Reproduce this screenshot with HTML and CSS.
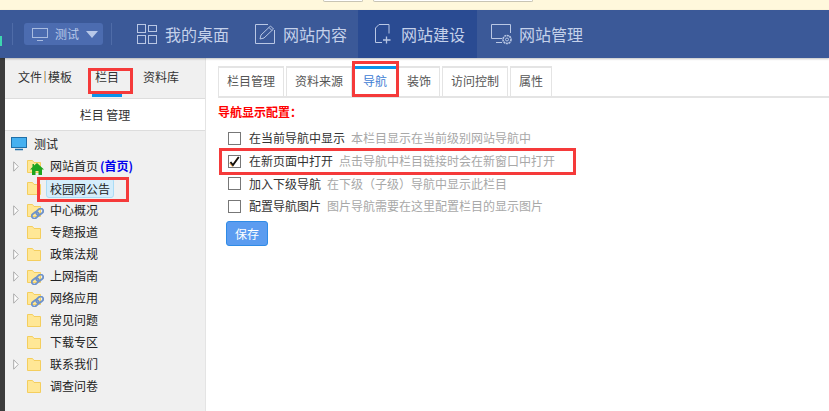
FILE: index.html
```html
<!DOCTYPE html>
<html lang="zh-CN">
<head>
  <meta charset="UTF-8">
  <meta name="viewport" content="width=device-width, initial-scale=1.0">
  <title>网站建设</title>
  <link rel="stylesheet" href="styles.css">
</head>
<body>

<svg class="defs" width="0" height="0">
  <symbol id="folder" viewBox="0 0 14 13">
    <path d="M.5 12.5V.5h5l1.5 2h6.500v10z" fill="#ffe796" stroke="#f4ce5e"/>
  </symbol>
  <symbol id="arrow" viewBox="0 0 6 11">
    <path d="M.7 .8 5.200 5.500 .7 10.200z" fill="#fff" stroke="#aaa"/>
  </symbol>
  <symbol id="home" viewBox="0 0 14 12">
    <path d="M7 0 14 6.500h-2V12H8.500V8h-3v4H2V6.500H0L2.500 4V1H4v1.600z" fill="#1fa51f"/>
  </symbol>
  <symbol id="chain" viewBox="0 0 13 11">
    <g fill="none" stroke="#6f93c9" stroke-width="1.800" transform="rotate(-38 6.500 5.500)">
      <rect x="0" y="3" width="7.500" height="5" rx="2.500"/>
      <rect x="5.500" y="3" width="7.500" height="5" rx="2.500"/>
    </g>
  </symbol>
</svg>

<!-- TOP NOTICE -->
<div class="notice">
  <span class="notice-field short"></span>
  <span class="notice-field long"></span>
</div>

<!-- HEADER -->
<div class="header">
  <span class="edge-mark"></span>
  <span class="sep"></span>
  <div class="site-select">
    <svg width="16" height="13" viewBox="0 0 16 13" fill="none" stroke="#a9bce0">
      <rect x=".5" y=".5" width="15" height="9"/>
      <path d="M5 12.500h6"/>
    </svg>
    <span>测试</span>
    <i class="caret"></i>
  </div>
  <span class="sep sep-right"></span>
  <div class="nav">
    <div class="nav-item">
      <svg class="nav-icon" width="20" height="20" viewBox="0 0 20 20" fill="none" stroke="#b9c7e4">
        <rect x=".5" y=".5" width="8" height="8"/>
        <rect x="11.500" y="1.500" width="8" height="6"/>
        <rect x=".5" y="11.500" width="8" height="8"/>
        <rect x="11.500" y="11.500" width="8" height="8"/>
      </svg>
      <span>我的桌面</span>
    </div>
    <div class="nav-item">
      <svg class="nav-icon" width="20" height="20" viewBox="0 0 20 20" fill="none" stroke="#b9c7e4">
        <path d="M13 .5H.5v19h19V6"/>
        <path d="M5 15l1-4L15.500 2l3 3L9 14z"/>
        <path d="M14 3.500l3 3"/>
      </svg>
      <span>网站内容</span>
    </div>
    <div class="nav-item active">
      <svg class="nav-icon build" width="16" height="20" viewBox="0 0 16 20" fill="none" stroke="#b9c7e4">
        <path d="M7 18.500H.5V4L4 .5h10v9"/>
        <path d="M11.500 12.500v7M8 16h7.500" stroke-width="1.300"/>
      </svg>
      <span>网站建设</span>
    </div>
    <div class="nav-item manage">
      <svg class="nav-icon" width="21" height="21" viewBox="0 0 21 21" fill="none" stroke="#b9c7e4">
        <path d="M11 14.500H.5V.5h19V9"/>
        <path d="M5 18.500h6"/>
        <circle cx="16" cy="15.500" r="4" stroke-width="1.600" stroke-dasharray="2 .6"/>
        <circle cx="16" cy="15.500" r="1.500"/>
      </svg>
      <span>网站管理</span>
    </div>
  </div>
</div>

<div class="main">
  <div class="edge"></div>

  <!-- SIDEBAR -->
  <div class="sidebar">
    <div class="side-tabs">
      <span class="side-tab first">文件<i class="tab-bar"></i>模板</span>
      <span class="side-tab current">栏目</span>
      <span class="side-tab library">资料库</span>
    </div>
    <div class="side-title">栏目 管理</div>
    <div class="tree">
      <div class="tree-root">
        <svg width="16" height="14" viewBox="0 0 16 14">
          <rect x=".5" y=".5" width="15" height="10" fill="#45b0f0" stroke="#1f6fa8"/>
          <path d="M4 12.500h8" stroke="#1f6fa8" stroke-width="1.500"/>
        </svg>
        <span>测试</span>
      </div>
      <div class="tree-row">
        <svg class="tree-arrow"><use href="#arrow"/></svg>
        <span class="tree-icon">
          <svg class="folder"><use href="#folder"/></svg>
          <svg class="badge home"><use href="#home"/></svg>
        </span>
        <span>网站首页</span>
        <b class="home-tag">(首页)</b>
      </div>
      <div class="tree-row">
        <span class="tree-arrow"></span>
        <span class="tree-icon"><svg class="folder"><use href="#folder"/></svg></span>
        <span class="selected">校园网公告</span>
      </div>
      <div class="tree-row">
        <svg class="tree-arrow"><use href="#arrow"/></svg>
        <span class="tree-icon">
          <svg class="folder"><use href="#folder"/></svg>
          <svg class="badge chain"><use href="#chain"/></svg>
        </span>
        <span>中心概况</span>
      </div>
      <div class="tree-row">
        <span class="tree-arrow"></span>
        <span class="tree-icon"><svg class="folder"><use href="#folder"/></svg></span>
        <span>专题报道</span>
      </div>
      <div class="tree-row">
        <svg class="tree-arrow"><use href="#arrow"/></svg>
        <span class="tree-icon"><svg class="folder"><use href="#folder"/></svg></span>
        <span>政策法规</span>
      </div>
      <div class="tree-row">
        <svg class="tree-arrow"><use href="#arrow"/></svg>
        <span class="tree-icon">
          <svg class="folder"><use href="#folder"/></svg>
          <svg class="badge chain"><use href="#chain"/></svg>
        </span>
        <span>上网指南</span>
      </div>
      <div class="tree-row">
        <svg class="tree-arrow"><use href="#arrow"/></svg>
        <span class="tree-icon">
          <svg class="folder"><use href="#folder"/></svg>
          <svg class="badge chain"><use href="#chain"/></svg>
        </span>
        <span>网络应用</span>
      </div>
      <div class="tree-row">
        <span class="tree-arrow"></span>
        <span class="tree-icon"><svg class="folder"><use href="#folder"/></svg></span>
        <span>常见问题</span>
      </div>
      <div class="tree-row">
        <span class="tree-arrow"></span>
        <span class="tree-icon"><svg class="folder"><use href="#folder"/></svg></span>
        <span>下载专区</span>
      </div>
      <div class="tree-row">
        <svg class="tree-arrow"><use href="#arrow"/></svg>
        <span class="tree-icon"><svg class="folder"><use href="#folder"/></svg></span>
        <span>联系我们</span>
      </div>
      <div class="tree-row">
        <span class="tree-arrow"></span>
        <span class="tree-icon"><svg class="folder"><use href="#folder"/></svg></span>
        <span>调查问卷</span>
      </div>
    </div>
  </div>

  <!-- CONTENT -->
  <div class="content">
    <div class="tabs">
      <span class="tab">栏目管理</span>
      <span class="tab">资料来源</span>
      <span class="tab active">导航</span>
      <span class="tab">装饰</span>
      <span class="tab">访问控制</span>
      <span class="tab">属性</span>
    </div>
    <div class="section-title">导航显示配置：</div>
    <div class="options">
      <div class="option">
        <span class="check"></span>
        <span class="option-name">在当前导航中显示</span>
        <span class="option-hint">本栏目显示在当前级别网站导航中</span>
      </div>
      <div class="option">
        <span class="check">
          <svg width="11" height="11" viewBox="0 0 11 11" fill="none">
            <path d="M1.500 6.500l2.500 3L9.800 1" stroke="#e8a04a" stroke-width="1.500" transform="translate(-.7 .3)"/>
            <path d="M1.500 6l2.500 3L9.800 1" stroke="#111" stroke-width="1.800"/>
          </svg>
        </span>
        <span class="option-name">在新页面中打开</span>
        <span class="option-hint">点击导航中栏目链接时会在新窗口中打开</span>
      </div>
      <div class="option">
        <span class="check"></span>
        <span class="option-name">加入下级导航</span>
        <span class="option-hint">在下级（子级）导航中显示此栏目</span>
      </div>
      <div class="option">
        <span class="check"></span>
        <span class="option-name">配置导航图片</span>
        <span class="option-hint">图片导航需要在这里配置栏目的显示图片</span>
      </div>
    </div>
    <button class="btn-save">保存</button>
  </div>
</div>

<!-- RED NOTES DRAWN OVER THE SCREEN -->
<div class="mark mark-build"></div>
<div class="mark mark-column"></div>
<div class="mark mark-nav"></div>
<div class="mark mark-notice"></div>
<div class="mark mark-open"></div>

</body>
</html>
```

FILE: styles.css
```css
* { box-sizing: border-box; }
html, body { height: 100%; }
body {
  margin: 0; position: relative;
  display: flex; flex-direction: column;
  overflow: hidden; background: #fff; color: #333;
  font-family: "Noto Sans CJK SC", "Liberation Sans", sans-serif;
  font-size: 12px; line-height: 16px;
}
.defs { position: absolute; }

/* top notice */
.notice {
  height: 10px; flex: none;
  display: flex; gap: 10px; padding-left: 323px;
  background: #fff8dc;
}
.notice-field {
  height: 2px; background: #fff;
  border: 1px solid #c8c4b4; border-top: none;
  border-radius: 0 0 3px 3px;
}
.notice-field.short { width: 40px; }
.notice-field.long { width: 160px; }

/* header */
.header {
  height: 48px; flex: none;
  display: flex; align-items: center;
  background: #3b5998; color: #c5d1ea;
  box-shadow: 0 1px 2px rgba(0, 0, 0, 0.25);
  position: relative; z-index: 1;
}
.edge-mark {
  width: 2px; height: 10px; margin-right: 10px;
  align-self: flex-end; margin-bottom: 12px;
  background: #3dd6b0;
}
.sep { width: 1px; height: 22px; background: #4f6ca8; }
.sep-right { margin-left: 8px; }
.site-select {
  width: 79px; height: 22px; margin-left: 11px;
  display: flex; align-items: center; padding-left: 8px;
  background: #4c6cb0; border-radius: 3px;
}
.site-select span { margin-left: 7px; color: #b8c8e8; }
.caret {
  margin-left: 7px;
  border: 6px solid transparent; border-top: 7px solid #b8c8e8; border-bottom: none;
}
.nav { display: flex; align-self: stretch; margin-left: 10px; }
.nav-item {
  display: flex; align-items: center;
  padding: 0 11px 0 15px;
  font-size: 16px;
}
.nav-item.active { background: #2a4b92; padding: 0 12px 0 17px; }
.nav-item.manage { padding-left: 14px; }
.nav-item.manage .nav-icon { margin-right: 7px; }
.nav-icon { margin-right: 8px; flex: none; }
.nav-icon.build { margin-right: 10px; }

/* layout */
.main { flex: 1; display: flex; min-height: 0; }
.edge { width: 5px; flex: none; background: #3c3c3c; }

/* sidebar */
.sidebar {
  width: 201px; flex: none;
  display: flex; flex-direction: column;
  background: #f0f0f0; border-right: 1px solid #e4e4e4;
}
.side-tabs {
  height: 40px; flex: none;
  display: flex; gap: 20px; padding-left: 13px;
  color: #333;
}
.side-tab { padding-top: 11px; }
.side-tab.first { display: flex; align-items: flex-start; }
.side-tab.library { margin-left: 1px; }
.tab-bar {
  width: 2px; height: 12px; margin: 2px 2px 0;
  background: linear-gradient(90deg, #eebb77 50%, #99bbdd 50%);
}
.side-tab.current {
  width: 30px; text-align: center;
  border-bottom: 3px solid #0a93ea; height: 39px;
}
.side-title {
  height: 33px; flex: none;
  display: flex; align-items: center; justify-content: center;
  background: #fff; white-space: pre;
  border-top: 1px solid #ddd; border-bottom: 1px solid #ddd;
}
.tree { flex: 1; padding-top: 2px; color: #222; }
.tree-root {
  height: 22px; display: flex; align-items: center; gap: 7px; padding-left: 6px;
}
.tree-row { height: 22px; display: flex; align-items: center; }
.tree-arrow { width: 6px; height: 11px; margin-left: 8px; flex: none; }
.tree-icon { width: 14px; height: 13px; margin: 0 9px 0 8px; flex: none; position: relative; }
.folder { display: block; width: 14px; height: 13px; }
.badge { position: absolute; }
.badge.home { width: 14px; height: 12px; left: 3px; top: 3px; }
.badge.chain { width: 13px; height: 11px; left: 4px; top: 4px; }
.home-tag { margin-left: 2px; color: #0000ee; }
.selected {
  margin-left: -4px; padding: 1px 3px;
  height: 20px; line-height: 17px; position: relative;
  background: #d4edfb; border: 1px solid #aadcf6; border-radius: 3px;
}

/* content */
.content { flex: 1; min-width: 0; padding: 8px 0 0 12px; }
.tabs {
  height: 32px;
  display: flex; gap: 2px;
  border-bottom: 2px solid #e4e4e4;
}
.tab {
  height: 30px; padding: 5px 8px 0;
  border: 2px solid #e4e4e4; border-bottom: none;
  border-left-width: 1px; border-right-width: 1px;
  color: #555; background: #fff;
}
.tab.active {
  height: 31px; margin-bottom: -1px;
  padding-top: 4px;
  border: none; border-top: 3px solid #0a93ea;
  padding-left: 9px; padding-right: 9px;
  color: #3f80d4;
}
.section-title {
  margin-top: 6px; height: 16px;
  color: #f00; font-weight: bold;
}
.options { margin: 7px 0 0 10px; }
.option { height: 22.700px; display: flex; align-items: center; }
.check {
  width: 13px; height: 13px; flex: none; margin-right: 8px;
  display: flex; align-items: center; justify-content: center;
  background: #fff; border: 1px solid #777;
}
.option-name { margin-right: 6px; color: #333; }
.option-hint { color: #a8a8a8; }
.btn-save {
  display: block; width: 42px; height: 25px;
  margin: 3px 0 0 8px; padding: 1px 0 0;
  background: #5b9cf0; color: #fff;
  border: 1px solid #2f8be6; border-radius: 3px;
  font: inherit; cursor: pointer;
}

/* red notes */
.mark { position: absolute; border: 3px solid #f53a3a; }
.mark-build { left: 391px; top: 13px; width: 93px; height: 37px; }
.mark-column { left: 88px; top: 68px; width: 45px; height: 26px; }
.mark-nav { left: 352px; top: 61px; width: 47px; height: 36px; }
.mark-notice { left: 37px; top: 177px; width: 92px; height: 25px; }
.mark-open { left: 219px; top: 148px; width: 357px; height: 27px; }
```
